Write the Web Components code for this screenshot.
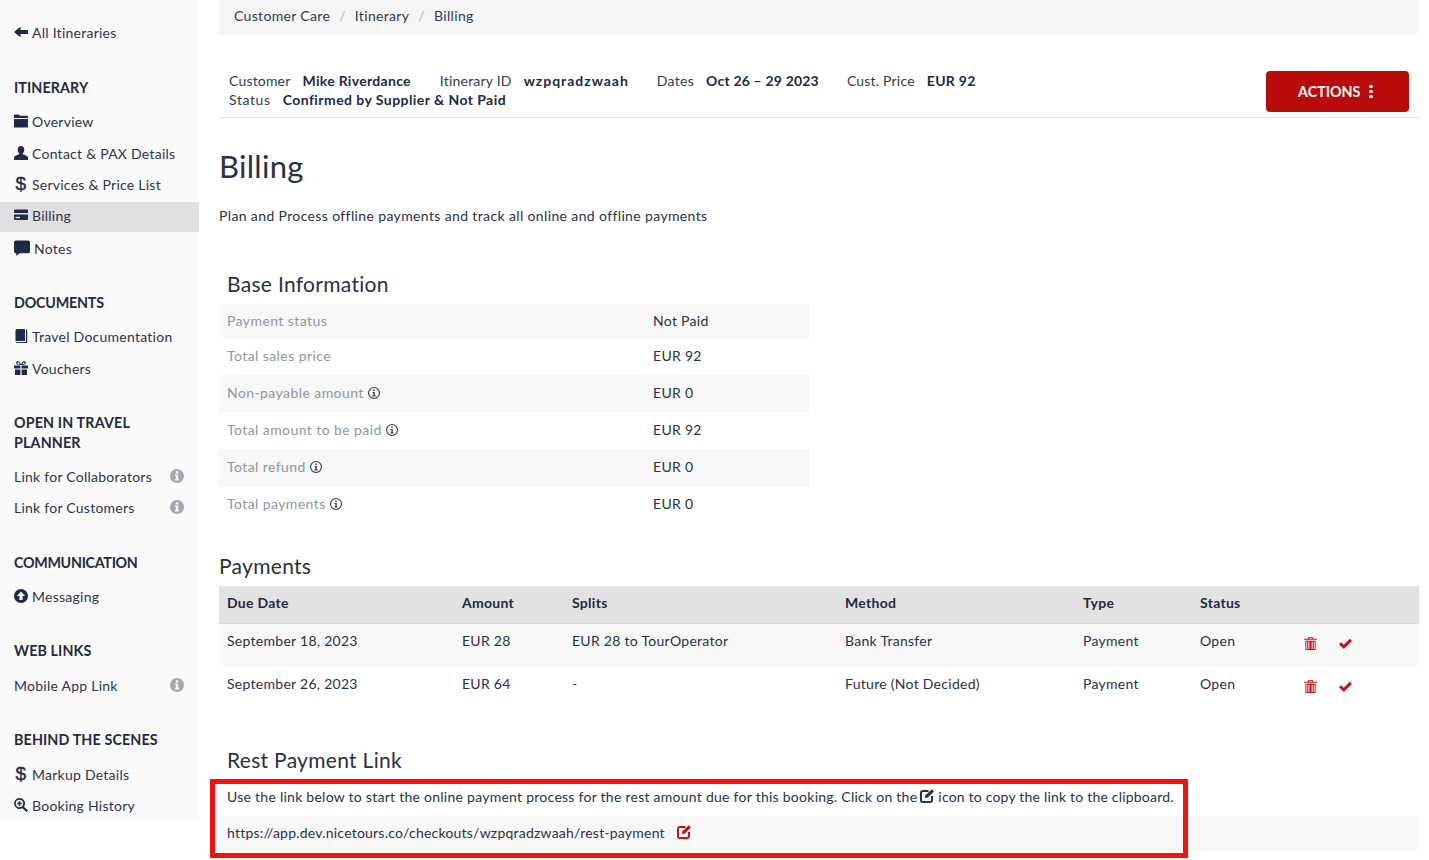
<!DOCTYPE html>
<html lang="en">
<head>
<meta charset="UTF-8">
<title>Billing</title>
<style>
  html, body { margin: 0; background: #fff; }
  body { font: 14px/20px Lato, "Open Sans", sans-serif; color: #2b3145; }
</style>
</head>
<body>
<billing-page></billing-page>
<script>
const ICONS = {
  back: '<path d="M1 8l6.500-5.500V6H15v4H7.500v3.500z"/>',
  folder: '<path d="M2 1.500h4l1 1.300h7c.6 0 1 .4 1 1V5H1V2.500c0-.6.4-1 1-1zM1 6h14v7.500c0 .6-.4 1-1 1H2c-.6 0-1-.4-1-1z"/>',
  user: '<path d="M8 1c2.200 0 3.300 1.700 3.300 3.800 0 1.800-.9 3.300-1.700 4 0 1 4.400 1.400 5.400 3.600V15H1v-2.600c1-2.200 5.400-2.600 5.400-3.600-.8-.7-1.700-2.200-1.700-4C4.700 2.700 5.800 1 8 1z"/>',
  card: '<path fill-rule="evenodd" d="M2 2.500h12a1 1 0 0 1 1 1V6H1V3.500a1 1 0 0 1 1-1zM1 7.500h14V12a1 1 0 0 1-1 1H2a1 1 0 0 1-1-1zM2.500 9.800v1.500h4.500V9.800z"/>',
  comment: '<path d="M2.500 1.500h11A1.500 1.500 0 0 1 15 3v8a1.500 1.500 0 0 1-1.500 1.500H6L3 15v-2.500h-.5A1.500 1.500 0 0 1 1 11V3a1.500 1.500 0 0 1 1.500-1.500z"/>',
  book: '<path d="M3.800 1H12v12H3.800c-.9 0-1.300.3-1.300 1.200V3C2.500 1.800 3 1 3.800 1zM13 1.500h1.200V15H4.200c-.7 0-1-.3-1-.6 0-.3.4-.4 1-.4H13z"/>',
  gift: '<path d="M1 5.500h6.400v3H1zM8.600 5.500H15v3H8.600zM2 9.500h5.400V15H2zM8.600 9.500H14V15H8.600zM7.600 5C5 5 3 4.200 3 2.800 3 1.400 4.800 .7 6 1.600 6.900 2.300 7.500 3.400 8 4.500c.5-1.100 1.100-2.200 2-2.900 1.200-.9 3-.2 3 1.200C13 4.200 11 5 8.400 5V4h2.200c.6 0 1-.4 1-1 0-.7-.8-.9-1.400-.3L8.400 5zM7.600 5L5.800 2.700c-.6-.6-1.400-.4-1.400.3 0 .6.4 1 1 1h2.200z"/>',
  up: '<path fill-rule="evenodd" d="M8 1a7 7 0 1 1 0 14A7 7 0 0 1 8 1zM8 3.500L3.800 8h2.600v4h3.200V8h2.600z"/>',
  zoom: '<path fill-rule="evenodd" d="M6.500 1a5.500 5.500 0 0 1 4.500 8.700l4 3.800-1.500 1.600-4-3.900A5.500 5.500 0 1 1 6.500 1zm0 1.800a3.700 3.700 0 1 0 0 7.400 3.700 3.700 0 0 0 0-7.400zM5.700 4.300h1.600v1.400h1.400v1.600H7.300v1.400H5.700V7.300H4.300V5.700h1.400z"/>',
  info: '<path fill-rule="evenodd" d="M8 1a7 7 0 1 1 0 14A7 7 0 0 1 8 1zM6.800 3.200v2.200h2.400V3.200zM6 6.500v1.300h.8v3.300H6v1.300h4v-1.300h-.8V6.500z"/>',
  infoline: '<path fill-rule="evenodd" d="M8 1a7 7 0 1 1 0 14A7 7 0 0 1 8 1zm0 1.300a5.700 5.700 0 1 0 0 11.400A5.700 5.700 0 0 0 8 2.300zM7.100 4h1.800v1.800H7.100zM6.300 6.800h2.600v3.900h.9V12H6.300v-1.300h1V8.100h-1z"/>',
  trash: '<path fill-rule="evenodd" d="M5.800 1h4.400l.7 1.800H15v1.100H1V2.800h4.100zM6.800 1.900l-.3.9h3l-.3-.9zM2.500 5h11v10h-11zM3.500 6v8h1V6zM5.700 6v8h1.100V6zM9.200 6v8h1.100V6zM11.500 6v8h1V6z"/>',
  check: '<path d="M1 8.700l2.300-2 2.800 2.700L12.700 3 15 5.200 6.200 14z"/>',
  edit: '<path d="M9.500 3H4a2 2 0 0 0-2 2v7.500a1.500 1.500 0 0 0 1.500 1.500H11a2 2 0 0 0 2-2V8" fill="none" stroke="currentColor" stroke-width="2"/><path d="M5.800 10.200l.7-3 6.300-6 2.200 2.300-6.200 6z"/>'
}

class AppIcon extends HTMLElement {
  connectedCallback () {
    const size = this.getAttribute('size') || 14
    const root = this.shadowRoot || this.attachShadow({mode: 'open'})
    root.innerHTML = `
      <style>
        :host { display: inline-flex; flex: none; width: ${size}px; height: ${size}px; }
        svg { width: 100%; height: 100%; fill: currentColor; display: block; }
      </style>
      <svg viewBox="1 1 14 14">${ICONS[this.getAttribute('name')] || ''}</svg>`
  }
}
customElements.define('app-icon', AppIcon)

class NavHeading extends HTMLElement {
  constructor () {
    super()
    this.attachShadow({mode: 'open'}).innerHTML = `
      <style>
        :host { display: block; padding: 0 14px; font-weight: 700; font-size: 14.300px; line-height: 20px; color: #232a40; }
      </style>
      <slot></slot>`
  }
}
customElements.define('nav-heading', NavHeading)

class NavItem extends HTMLElement {
  connectedCallback () {
    const icon = this.getAttribute('icon')
    const iconSize = icon === 'comment' ? 16 : 14
    const glyph = this.hasAttribute('dollar')
      ? '<span class="dollar">$</span>'
      : icon ? `<app-icon name="${icon}" size="${iconSize}"></app-icon>` : ''
    this.attachShadow({mode: 'open'}).innerHTML = `
      <style>
        :host { display: flex; align-items: center; height: 31px; padding: 0 15px 0 14px; gap: 4px; letter-spacing: .25px; color: #2f3549; }
        :host([active]) { background: #e0e0e0; }
        app-icon { color: #1f2a4a; margin-top: -2px; }
        .dollar { width: 14px; text-align: center; font: 400 19px/20px "Liberation Sans", sans-serif; -webkit-text-stroke: .4px #1f2a4a; color: #1f2a4a; margin-top: -2px; }
        .grow { flex: 1; }
        app-icon.tip { color: #a5a8b0; }
      </style>
      ${glyph}<span class="grow"><slot></slot></span>
      ${this.hasAttribute('info') ? '<app-icon class="tip" name="info" size="14"></app-icon>' : ''}`
  }
}
customElements.define('nav-item', NavItem)

class SideNav extends HTMLElement {
  constructor () {
    super()
    this.attachShadow({mode: 'open'}).innerHTML = `
      <style>
        :host { display: block; flex: none; width: 199px; height: 821px; background: #fafafb; box-sizing: border-box; padding-top: 18px; }
      </style>
      <slot></slot>`
  }
}
customElements.define('side-nav', SideNav)

class CrumbBar extends HTMLElement {
  constructor () {
    super()
    this.attachShadow({mode: 'open'}).innerHTML = `
      <style>
        :host { display: flex; align-items: center; height: 35px; padding: 0 15px 3px; box-sizing: border-box; background: #f5f5f5; gap: 9px; letter-spacing: .33px; color: #343a4d; }
        i { font-style: normal; color: #b4b7bd; }
      </style>
      <span>Customer Care</span><i>/</i><span>Itinerary</span><i>/</i><span>Billing</span>`
  }
}
customElements.define('crumb-bar', CrumbBar)

class TripSummary extends HTMLElement {
  constructor () {
    super()
    this.attachShadow({mode: 'open'}).innerHTML = `
      <style>
        :host { display: flex; align-items: flex-end; justify-content: space-between; height: 83px; box-sizing: border-box; padding: 0 10px 5px; border-bottom: 1px solid #e2e2e2; letter-spacing: .3px; line-height: 19px; color: #343a4d; }
        .line { display: flex; }
        .line span { margin-right: 12px; }
        .line b { margin-right: 28px; color: #232a40; font-weight: 700; }
        .text { margin-bottom: 3px; }
        button { width: 143px; height: 41px; padding: 0 4px 0 0; border: 0; border-radius: 4px; background: #b90b0b; color: #fff; font: 700 14.300px Lato, sans-serif; display: flex; align-items: center; justify-content: center; gap: 9px; }
        .dots { display: grid; gap: 1.500px; }
        .dots i { width: 3.500px; height: 3.500px; border-radius: 50%; background: #fff; }
      </style>
      <div class="text">
        <div class="line"><span style="letter-spacing:.18px">Customer</span><b style="margin-right:29px">Mike Riverdance</b><span style="letter-spacing:.2px">Itinerary ID</span><b style="letter-spacing:.98px">wzpqradzwaah</b><span>Dates</span><b style="letter-spacing:.18px">Oct 26 – 29 2023</b><span style="letter-spacing:.2px">Cust. Price</span><b>EUR 92</b></div>
        <div class="line"><span style="letter-spacing:.6px">Status</span><b style="letter-spacing:.44px">Confirmed by Supplier &amp; Not Paid</b></div>
      </div>
      <button>ACTIONS <span class="dots"><i></i><i></i><i></i></span></button>`
  }
}
customElements.define('trip-summary', TripSummary)

class SectionTitle extends HTMLElement {
  constructor () {
    super()
    this.attachShadow({mode: 'open'}).innerHTML = `
      <style>
        :host { display: block; font-size: 21px; line-height: 26px; color: #2a3044; letter-spacing: .3px; }
        :host([inset]) { padding-left: 8px; }
      </style>
      <slot></slot>`
  }
}
customElements.define('section-title', SectionTitle)

class InfoRow extends HTMLElement {
  connectedCallback () {
    const h = this.getAttribute('h') || 36
    this.attachShadow({mode: 'open'}).innerHTML = `
      <style>
        :host { display: grid; grid-template-columns: 426px 1fr; align-items: center; height: ${h}px; box-sizing: border-box; padding: 0 0 2px 8px; letter-spacing: .3px; }
        :host(:nth-child(odd)) { background: #f7f7f7; }
        .label { display: flex; align-items: center; gap: 4px; color: #92959f; letter-spacing: .42px; }
        app-icon { color: #343a4d; }
      </style>
      <div class="label">${this.getAttribute('label')}${this.hasAttribute('tip') ? '<app-icon name="infoline" size="12"></app-icon>' : ''}</div>
      <div><slot></slot></div>`
  }
}
customElements.define('info-row', InfoRow)

class InfoTable extends HTMLElement {
  constructor () {
    super()
    this.attachShadow({mode: 'open'}).innerHTML = `
      <style>:host { display: block; width: 590px; margin-top: 7px; }</style>
      <slot></slot>`
  }
}
customElements.define('info-table', InfoTable)

const PAY_COLS = 'grid-template-columns: 235px 110px 273px 238px 117px 104px 35px 1fr;'

class PayRow extends HTMLElement {
  connectedCallback () {
    const cells = this.getAttribute('cells').split('|')
    const head = this.hasAttribute('head')
    this.attachShadow({mode: 'open'}).innerHTML = `
      <style>
        :host { display: grid; ${PAY_COLS} align-items: center; height: 43px; box-sizing: border-box; padding: 0 0 10px 8px; letter-spacing: .28px; }
        :host([head]) { height: 38px; padding-bottom: 3px; background: #e2e2e2; font-weight: 700; color: #232a40; border-bottom: 1px solid #d8d8d8; }
        :host([odd]) { background: #f7f7f7; }
        app-icon { color: #c8101a; margin-top: 6px; }
      </style>
      ${cells.map(c => `<div>${c}</div>`).join('')}
      ${head ? '' : '<app-icon name="trash" size="13"></app-icon><app-icon name="check" size="13"></app-icon>'}`
  }
}
customElements.define('pay-row', PayRow)

class RestLink extends HTMLElement {
  constructor () {
    super()
    this.attachShadow({mode: 'open'}).innerHTML = `
      <style>
        :host { display: block; position: relative; margin-top: 14px; letter-spacing: .26px; }
        .note { padding: 0 8px 9px; display: flex; align-items: center; white-space: pre; }
        .note app-icon { margin: -2px 4px 0 3px; color: #2b3145; }
        .tail { letter-spacing: .2px; }
        .url { display: flex; align-items: center; height: 35px; box-sizing: border-box; padding: 0 0 2px 8px; background: #f7f7f7; gap: 12px; letter-spacing: .22px; }
        .url app-icon { color: #c8101a; margin-top: -2px; }
        .mark { position: absolute; left: -9px; top: -8px; width: 978px; height: 79px; box-sizing: border-box; border: 5px solid #ff0d0d; pointer-events: none; }
      </style>
      <div class="note">Use the link below to start the online payment process for the rest amount due for this booking. Click on the<app-icon name="edit" size="14"></app-icon><span class="tail">icon to copy the link to the clipboard.</span></div>
      <div class="url"><span>https://app.dev.nicetours.co/checkouts/wzpqradzwaah/rest-payment</span><app-icon name="edit" size="14"></app-icon></div>
      <div class="mark"></div>`
  }
}
customElements.define('rest-link', RestLink)

class BillingPage extends HTMLElement {
  constructor () {
    super()
    const root = this.attachShadow({mode: 'open'})
    root.innerHTML = `
      <style>
        :host { display: flex; gap: 20px; height: 860px; overflow: hidden; }
        main { width: 1200px; flex: none; }
        h1 { margin: 30px 0 0; font-weight: 400; font-size: 31px; line-height: 36px; color: #2a3044; letter-spacing: .3px; }
        p { margin: 22px 0 0; letter-spacing: .37px; line-height: 20px; }
      </style>
      <side-nav>
        <nav-item icon="back" style="height:30px">All Itineraries</nav-item>
        <nav-heading style="margin-top:30px;letter-spacing:.1px">ITINERARY</nav-heading>
        <nav-item icon="folder" style="margin-top:8px">Overview</nav-item>
        <nav-item icon="user" style="height:33px">Contact &amp; PAX Details</nav-item>
        <nav-item dollar style="height:30px;padding-bottom:2px">Services &amp; Price List</nav-item>
        <nav-item icon="card" active style="height:28px;padding-bottom:2px">Billing</nav-item>
        <nav-item icon="comment" style="height:34px">Notes</nav-item>
        <nav-heading style="margin-top:27px;letter-spacing:-.2px">DOCUMENTS</nav-heading>
        <nav-item icon="book" style="margin-top:8px;height:32px">Travel Documentation</nav-item>
        <nav-item icon="gift" style="height:32px">Vouchers</nav-item>
        <nav-heading style="margin-top:28px;letter-spacing:.15px">OPEN IN TRAVEL PLANNER</nav-heading>
        <nav-item info style="margin-top:8px">Link for Collaborators</nav-item>
        <nav-item info>Link for Customers</nav-item>
        <nav-heading style="margin-top:30px;letter-spacing:-.3px">COMMUNICATION</nav-heading>
        <nav-item icon="up" style="margin-top:8px;height:32px">Messaging</nav-item>
        <nav-heading style="margin-top:28px;letter-spacing:.1px">WEB LINKS</nav-heading>
        <nav-item info style="margin-top:9px;height:32px">Mobile App Link</nav-item>
        <nav-heading style="margin-top:28px;letter-spacing:.12px">BEHIND THE SCENES</nav-heading>
        <nav-item dollar style="margin-top:9px;height:32px">Markup Details</nav-item>
        <nav-item icon="zoom" style="height:30px">Booking History</nav-item>
      </side-nav>
      <main>
        <crumb-bar></crumb-bar>
        <trip-summary></trip-summary>
        <h1>Billing</h1>
        <p>Plan and Process offline payments and track all online and offline payments</p>
        <section-title inset style="margin-top:45px">Base Information</section-title>
        <info-table>
          <info-row label="Payment status" h="35">Not Paid</info-row>
          <info-row label="Total sales price" h="36">EUR 92</info-row>
          <info-row label="Non-payable amount" tip h="37">EUR 0</info-row>
          <info-row label="Total amount to be paid" tip h="37">EUR 92</info-row>
          <info-row label="Total refund" tip h="38">EUR 0</info-row>
          <info-row label="Total payments" tip h="36">EUR 0</info-row>
        </info-table>
        <section-title style="margin-top:30px">Payments</section-title>
        <div style="margin-top:7px">
          <pay-row head cells="Due Date|Amount|Splits|Method|Type|Status"></pay-row>
          <pay-row odd cells="September 18, 2023|EUR 28|EUR 28 to TourOperator|Bank Transfer|Payment|Open"></pay-row>
          <pay-row cells="September 26, 2023|EUR 64|-|Future (Not Decided)|Payment|Open"></pay-row>
        </div>
        <section-title inset style="margin-top:37px">Rest Payment Link</section-title>
        <rest-link></rest-link>
      </main>`
  }
}
customElements.define('billing-page', BillingPage)
</script>
</body>
</html>
